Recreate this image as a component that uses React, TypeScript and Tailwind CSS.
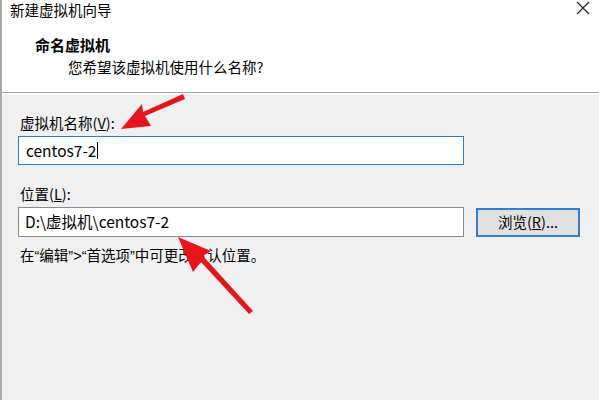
import React from "react";

const cjk = { fontFamily: '"Noto Sans CJK SC", "Noto Sans", sans-serif' };
const q = { fontFamily: '"Liberation Sans", sans-serif' };

export default function App() {
  return (
    <div className="relative w-[599px] h-[400px] overflow-hidden bg-[#f0f0f0] border-l-2 border-[#a9a9a9] text-black" style={cjk}>
      <div className="h-[93px] bg-white border-b border-[#a0a0a0] flex flex-col">
        <div className="flex justify-between items-start pl-[8px] pr-[8px]">
          <div className="text-[14.5px] leading-[19px]">新建虚拟机向导</div>
          <svg width="14" height="14" viewBox="0 0 14 14" className="mt-[1px] mr-[1px]">
            <path d="M1 1 L13 13 M13 1 L1 13" stroke="#222" strokeWidth="1.2" />
          </svg>
        </div>
        <div className="pl-[33px] mt-[16px] text-[15px] leading-[20px] font-bold">命名虚拟机</div>
        <div className="pl-[66px] mt-[2px] text-[14.5px] leading-[20px]">您希望该虚拟机使用什么名称?</div>
      </div>
      <div className="border-t border-white pl-[16px] pt-[19px] flex flex-col">
        <div className="pl-[2px] text-[14.5px] leading-[20px]">
          虚拟机名称(<span className="underline">V</span>):
        </div>
        <div className="mt-[3px] w-[446px] h-[29px] bg-white border border-[#2f7fd0] flex items-center pl-[7px] text-[15.5px]">
          <span>centos7-2</span>
          <span className="inline-block w-[1px] h-[17px] bg-black ml-[1px]" />
        </div>
        <div className="pl-[2px] mt-[19px] text-[14.5px] leading-[20px]">
          位置(<span className="underline">L</span>):
        </div>
        <div className="mt-[3px] flex items-center gap-[12px]">
          <div className="w-[446px] h-[30px] bg-white border border-[#8a8a8a] flex items-center pl-[6px] text-[15.5px]">
            D:\虚拟机\centos7-2
          </div>
          <div className="w-[104px] h-[29px] bg-[#e1e1e1] border-2 border-[#2f7fd0] flex items-center justify-center text-[14.5px]">
            浏览(<span className="underline">R</span>)...
          </div>
        </div>
        <div className="pl-[2px] mt-[8px] text-[14.5px] leading-[20px]">
          在<span style={q}>“</span>编辑<span style={q}>”&gt;“</span>首选项<span style={q}>”</span>中可更改默认位置。
        </div>
      </div>
      <svg className="absolute left-0 top-0 pointer-events-none" width="599" height="400" viewBox="0 0 599 400">
        <g fill="#e8141c">
          <path d="M181 94 L183 99 L143 116 L149 126 L119 129 L140 104 L141 112 Z" />
          <path d="M251 311 L247 314 L199 262 L191 272 L176 237 L209 251 L201 256 Z" />
        </g>
      </svg>
    </div>
  );
}
